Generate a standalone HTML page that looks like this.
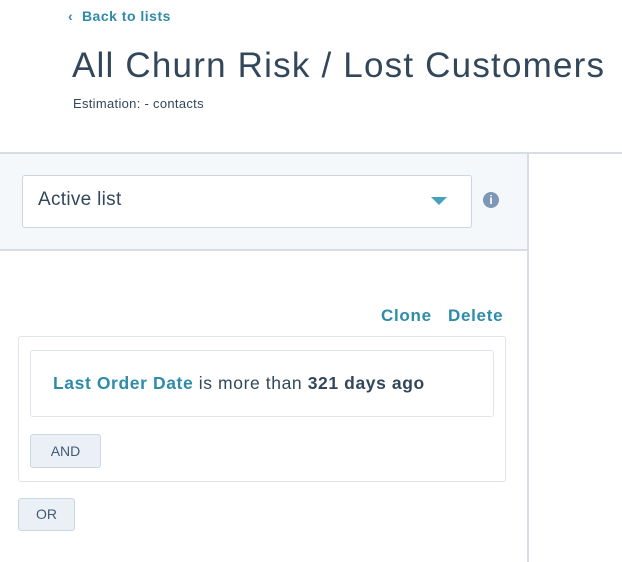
<!DOCTYPE html>
<html><head><style>
*{margin:0;padding:0;box-sizing:border-box}
body{width:622px;height:562px;background:#fff;font-family:"Liberation Sans",sans-serif;color:#33475b;position:relative;overflow:hidden}
.a{position:absolute}
.teal{color:#2e8ca8}
</style></head><body>
<div class="a teal" style="left:68px;top:8px;font-size:14px;font-weight:bold;letter-spacing:0.5px">‹&nbsp;&nbsp;Back to lists</div>
<div class="a" style="left:72px;top:46px;font-size:35px;font-weight:300;color:#33475b;white-space:nowrap;letter-spacing:1.2px">All Churn Risk / Lost Customers</div>
<div class="a" style="left:73px;top:96px;font-size:13px;letter-spacing:0.3px">Estimation: - contacts</div>
<div class="a" style="left:0;top:152px;width:622px;height:2px;background:#d6dde6"></div>
<div class="a" style="left:0;top:154px;width:527px;height:96px;background:#f5f8fa"></div>
<div class="a" style="left:0;top:249px;width:528px;height:2px;background:#d6dde6"></div>
<div class="a" style="left:527px;top:154px;width:2px;height:408px;background:#d6dde6"></div>
<div class="a" style="left:22px;top:175px;width:450px;height:53px;background:#fff;border:1px solid #cbd6e2;border-radius:3px"></div>
<div class="a" style="left:38px;top:189px;font-size:19px;color:#33475b;letter-spacing:0.3px">Active list</div>
<div class="a" style="left:431px;top:197px;width:0;height:0;border-left:8px solid transparent;border-right:8px solid transparent;border-top:8px solid #44a2bd"></div>
<div class="a" style="left:483px;top:192px;width:16px;height:16px;border-radius:50%;background:#7c98b6;color:#fff;font-size:12px;font-weight:bold;text-align:center;line-height:16px">i</div>
<div class="a teal" style="left:381px;top:306px;font-size:17px;font-weight:bold;letter-spacing:0.7px">Clone</div>
<div class="a teal" style="left:448px;top:306px;font-size:17px;font-weight:bold;letter-spacing:0.7px">Delete</div>
<div class="a" style="left:18px;top:336px;width:488px;height:146px;border:1px solid #dfe3eb;border-radius:3px"></div>
<div class="a" style="left:30px;top:350px;width:464px;height:67px;border:1px solid #dfe3eb;border-radius:3px"></div>
<div class="a" style="left:53px;top:373px;font-size:17.5px;white-space:nowrap;letter-spacing:0.6px"><span class="teal" style="font-weight:bold">Last Order Date</span> is more than <b>321 days ago</b></div>
<div class="a" style="left:30px;top:434px;width:71px;height:34px;background:#eaf0f6;border:1px solid #cbd6e2;border-radius:3px;font-size:14px;text-align:center;line-height:32px;color:#425b76">AND</div>
<div class="a" style="left:18px;top:498px;width:57px;height:33px;background:#eaf0f6;border:1px solid #cbd6e2;border-radius:3px;font-size:14px;text-align:center;line-height:31px;color:#425b76">OR</div>
</body></html>
